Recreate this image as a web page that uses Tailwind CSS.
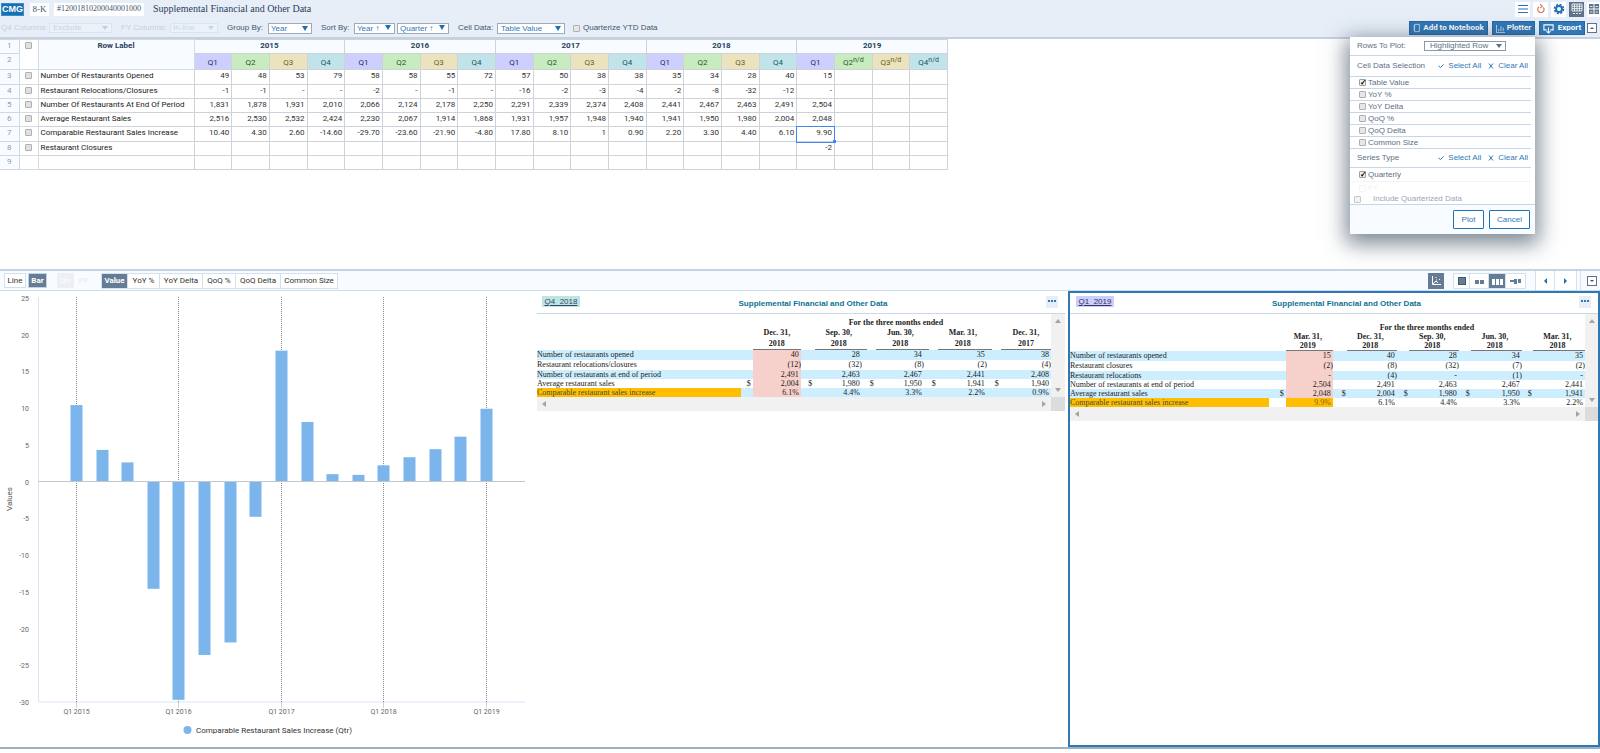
<!DOCTYPE html>
<html lang="en">
<head>
<meta charset="utf-8">
<title>Supplemental Financial and Other Data</title>
<script src="https://cdn.jsdelivr.net/npm/@tailwindcss/browser@4"></script>
</head>
<body class="bg-white font-['Liberation_Sans',Arial,sans-serif] text-[8px] leading-[10px] text-[#333]">
<div class="relative flex min-h-screen flex-col">
  <header class="h-[39px] border-b-2 border-[#c5d1e2] bg-[#e7eef8] text-[#41566e]">
    <div class="flex h-[18px] items-center">
      <span class="ml-px flex h-[13px] w-[23px] items-center justify-center border border-[#3c8ac6] bg-[#1670b4] text-[9px] font-bold text-white">CMG</span>
      <span class="ml-[6px] flex h-[13px] w-[19px] items-center justify-center bg-white font-['Liberation_Serif',serif] text-[9px]">8-K</span>
      <span class="ml-[5px] flex h-[13px] w-[90px] items-center justify-center bg-white font-['Liberation_Serif',serif] text-[8px]">#12001810200040001000</span>
      <h1 class="ml-[9px] font-['Liberation_Serif',serif] text-[10px] text-[#27405c]">Supplemental Financial and Other Data</h1>
      <nav class="ml-auto flex gap-[3px]">
        <button aria-label="Menu" class="flex size-[15px] items-center justify-center bg-white"><svg viewBox="0 0 12 12" class="size-3" fill="none" stroke="#2c74b8" stroke-width="1.2"><path d="M1 2.500h10M1 6h10M1 9.500h10"/></svg></button>
        <button aria-label="Reset" class="flex size-[15px] items-center justify-center bg-white"><svg viewBox="0 0 12 12" class="size-[10px]" fill="none" stroke="#dd6a4c" stroke-width="1.300"><path d="M3.500 3.500A3.800 3.800 0 1 0 8.800 4"/><path d="M5 .5l2.500 2.300L5 5"/></svg></button>
        <button aria-label="Settings" class="flex size-[15px] items-center justify-center bg-white"><svg viewBox="0 0 12 12" class="size-[12px]" fill="none" stroke="#1f6db4"><circle cx="6" cy="6" r="3" stroke-width="2"/><circle cx="6" cy="6" r="4.600" stroke-width="1.400" stroke-dasharray="2.100 1.510"/></svg></button>
        <button aria-label="Table view" class="flex size-[15px] items-center justify-center bg-[#5e7389]"><svg viewBox="0 0 12 12" class="size-[12px]" fill="none" stroke="#fff" stroke-width=".8"><path d="M1 1h10v7H1zM1 3.300h10M1 5.600h10M3.500 1v7M6 1v7M8.500 1v7M2 10.500h2M5 10.500h2M8 10.500h2"/></svg></button>
        <button aria-label="Grid view" class="flex h-[15px] w-[13px] items-center justify-center bg-white"><svg viewBox="0 0 12 12" class="size-[12px]" fill="#5e7389"><path d="M1 1h4.500v4.500H1zM6.500 1H11v4.500H6.500zM1 6.500h4.500V11H1zM6.500 6.500H11V11H6.500z"/><path d="M2 3.500h2.500M7.500 3.500H10M2 9h2.500M7.500 9H10" stroke="#fff" stroke-width=".8"/></svg></button>
      </nav>
    </div>
    <div class="flex h-[20px] items-center">
      <div class="flex items-center opacity-20">
        <label for="q4" class="ml-px w-[48px]">Q4 Columns:</label>
        <span class="relative"><select id="q4" class="block h-[10px] w-[63px] appearance-none border border-[#b5bfcb] bg-white px-[3px] leading-[8px]"><option>Exclude</option></select><i class="pointer-events-none absolute top-[3px] right-1 border-x-3 border-t-4 border-x-transparent border-t-[#41566e]"></i></span>
        <label for="fy" class="ml-[9px] w-[49px]">FY Columns:</label>
        <span class="relative"><select id="fy" class="block h-[10px] w-[48px] appearance-none border border-[#b5bfcb] bg-white px-[2px] leading-[8px] text-[#2f78b8]"><option>In-line</option></select><i class="pointer-events-none absolute top-[3px] right-1 border-x-3 border-t-4 border-x-transparent border-t-[#2f78b8]"></i></span>
      </div>
      <label for="group" class="ml-[9px] w-[41px]">Group By:</label>
      <span class="relative"><select id="group" class="block h-[11px] w-[44px] appearance-none border border-[#9fabb9] bg-white px-[2px] leading-[9px] text-[#2f78b8]"><option>Year</option></select><i class="pointer-events-none absolute top-[3px] right-1 border-x-3 border-t-5 border-x-transparent border-t-[#1c70b5]"></i></span>
      <label for="sort" class="ml-[9px] w-[33px]">Sort By:</label>
      <span class="relative"><select id="sort" class="block h-[11px] w-[41px] appearance-none border border-[#9fabb9] bg-white px-[2px] leading-[9px] text-[#2f78b8]"><option>Year ↑</option></select><i class="pointer-events-none absolute top-[2px] right-1 border-x-3 border-t-5 border-x-transparent border-t-[#1c70b5]"></i></span>
      <span class="relative ml-[2px]"><select aria-label="Then sort by" class="block h-[11px] w-[52px] appearance-none border border-[#9fabb9] bg-white px-[2px] leading-[9px] text-[#2f78b8]"><option>Quarter ↑</option></select><i class="pointer-events-none absolute top-[2px] right-1 border-x-3 border-t-5 border-x-transparent border-t-[#1c70b5]"></i></span>
      <label for="cell" class="ml-[9px] w-[39px]">Cell Data:</label>
      <span class="relative"><select id="cell" class="block h-[11px] w-[68px] appearance-none border border-[#9fabb9] bg-white px-[3px] leading-[9px] text-[#2f78b8]"><option>Table Value</option></select><i class="pointer-events-none absolute top-[3px] right-1 border-x-3 border-t-5 border-x-transparent border-t-[#1c70b5]"></i></span>
      <label class="ml-[8px] flex items-center gap-[3px]"><input type="checkbox" class="size-[7px] appearance-none rounded-[1px] border border-[#b0b0b0] bg-[#e6e6e6]">Quarterize YTD Data</label>
      <div class="ml-auto flex items-center gap-[4px] pr-[3px] font-['Roboto',sans-serif] font-bold text-white">
        <button class="flex h-[14px] w-[79px] items-center justify-center gap-[2px] border border-[#2568a5] bg-[#3178b7] text-[8px] whitespace-nowrap"><svg viewBox="0 0 10 12" class="h-[10px] w-2" fill="none" stroke="#cfe2f4"><path d="M2 1.500h6v9H2zM.5 3.500h2M.5 6h2M.5 8.500h2"/></svg>Add to Notebook</button>
        <button class="flex h-[14px] w-[43px] items-center justify-center gap-[2px] border border-[#2568a5] bg-[#3178b7] text-[8px]"><svg viewBox="0 0 10 10" class="size-[9px]" fill="none" stroke="#cfe2f4"><path d="M.5 1v8.500H10M3 8V5.500M5.500 8V2.500M8 8V4"/></svg>Plotter</button>
        <button class="flex h-[14px] w-[46px] items-center justify-center gap-[4px] border border-[#2568a5] bg-[#3178b7] text-[8px]"><svg viewBox="0 0 12 12" class="size-[11px]" fill="none" stroke="#fff" stroke-width="1.200"><path d="M4 7.500H1V2h10v5.500H8M6 5v6M3.800 8.800L6 11l2.200-2.200"/></svg>Export</button>
        <button aria-label="Collapse" class="-ml-[2px] flex size-[10px] items-center justify-center border border-[#5e7389] bg-white"><i class="border-x-2 border-b-2 border-x-transparent border-b-[#41566e]"></i></button>
      </div>
    </div>
  </header>

  <section class="h-[230px] font-['Roboto',sans-serif]">
    <table id="data" class="w-[948px] table-fixed border-collapse text-right">
      <colgroup><col class="w-[19px]"><col class="w-[19px]"><col class="w-[156px]"></colgroup>
      <thead></thead><tbody></tbody>
    </table>
  </section>

  <div class="flex h-[22px] items-center border-t-2 border-b border-t-[#c5d3e5] border-b-[#cddced] bg-[#f8fbff] pl-[4px] font-['Roboto',sans-serif] text-[#333]">
    <div class="flex"><button class="h-[15px] w-[22px] border border-[#d3e0ee] bg-white">Line</button><button class="ml-[2px] h-[15px] w-[19px] border border-[#c3d3e4] bg-[#647c94] font-bold text-white">Bar</button></div>
    <div class="ml-[10px] flex text-[#e3e8ee]"><button disabled class="h-[15px] w-[17px] bg-[#eceff3] text-white">Qtr</button><button disabled class="h-[15px] w-[18px]">FY</button></div>
    <div class="ml-[9px] flex divide-x divide-[#d3e0ee] border border-[#d3e0ee] bg-white"><button class="h-[14px] w-[26px] bg-[#647c94] font-bold text-white">Value</button><button class="w-[32px]">YoY %</button><button class="w-[43px]">YoY Delta</button><button class="w-[33px]">QoQ %</button><button class="w-[45px]">QoQ Delta</button><button class="w-[56px]">Common Size</button></div>
    <div class="ml-auto flex items-center">
      <button aria-label="Chart" class="flex size-[16px] items-center justify-center bg-[#647c94]"><svg viewBox="0 0 10 10" class="size-[10px]" fill="none" stroke="#fff"><path d="M1.500 0v8.500H10M2 8l3-3 2 2M4.500 1.500h1M8 3.500h1M5 4h1"/></svg></button>
      <div class="ml-[9px] flex h-[16px] divide-x divide-[#d3e0ee] border border-[#d3e0ee] bg-white">
        <button aria-label="One panel" class="flex w-[16px] items-center justify-center"><i class="size-[8px] border border-[#405a75] bg-[#647c94]"></i></button>
        <button aria-label="Two panels" class="flex w-[19px] items-center justify-center gap-px pt-[3px]"><i class="size-[4px] bg-[#647c94]"></i><i class="size-[4px] bg-[#647c94]"></i></button>
        <button aria-label="Three panels" class="flex w-[17px] items-center justify-center gap-px bg-[#647c94] pt-[2px]"><i class="h-[6px] w-[3px] bg-white"></i><i class="h-[6px] w-[3px] bg-white"></i><i class="h-[6px] w-[3px] bg-white"></i></button>
        <button aria-label="Mixed panels" class="flex w-[19px] items-center justify-center"><i class="h-[2px] w-[4px] bg-[#647c94]"></i><i class="mt-[2px] mr-px h-[5px] w-[3px] bg-[#647c94]"></i><i class="h-[4px] w-[3px] bg-[#647c94]"></i></button>
      </div>
      <div class="ml-[9px] flex h-[19px] divide-x divide-[#d3e0ee] border-x border-[#d3e0ee] bg-white">
        <button aria-label="Previous" class="flex w-[19px] items-center justify-center"><i class="border-y-3 border-r-3 border-y-transparent border-r-[#1c70b5]"></i></button>
        <button aria-label="Next" class="flex w-[21px] items-center justify-center"><i class="border-y-3 border-l-3 border-y-transparent border-l-[#1c70b5]"></i></button>
      </div>
      <div class="ml-[3px] flex h-[19px] items-center border-l border-[#d3e0ee] pr-[3px] pl-[6px]"><button aria-label="Expand" class="flex size-[10px] items-center justify-center border border-[#5e7389] bg-white"><i class="border-x-2 border-t-2 border-x-transparent border-t-[#41566e]"></i></button></div>
    </div>
  </div>

  <main class="flex flex-1 border-b-2 border-[#9db0c2]">
    <figure class="w-[535px] shrink-0">
      <svg id="chart" viewBox="0 0 535 455" class="block w-full font-['Roboto',sans-serif]" role="img" aria-label="Comparable Restaurant Sales Increase by quarter"></svg>
    </figure>
    <section class="ml-[2px] min-w-0 flex-1">
      <div class="flex h-[23px] items-center justify-between border-b border-[#c9d9ea] px-[5px]"><a href="#q4-2018" class="-mt-px w-[38px] bg-[#bfe4e8] text-center leading-[11px] text-[#2c4a5c] underline">Q4&nbsp; 2018</a><h2 class="pt-[3px] text-[8px] font-bold text-[#0c7391]">Supplemental Financial and Other Data</h2><button aria-label="More" class="-mt-px mr-[2px] flex size-[12px] justify-center gap-px bg-[#e7eef8] pt-1"><i class="size-[2px] bg-[#2f78b8]"></i><i class="size-[2px] bg-[#2f78b8]"></i><i class="size-[2px] bg-[#2f78b8]"></i></button></div>
      <div class="flex">
        <div class="min-w-0 flex-1"><table id="doc1" class="w-full table-fixed border-collapse text-right font-['Liberation_Serif',serif] text-[8px] leading-[9px] text-[#222]"></table></div>
        <div class="flex w-[14px] flex-col items-center justify-between bg-[#f1f1f1] py-[5px]"><i class="border-x-3 border-b-4 border-x-transparent border-b-[#a3a3a3]"></i><i class="border-x-3 border-t-4 border-x-transparent border-t-[#a3a3a3]"></i></div>
      </div>
      <div class="flex h-[14px] items-center bg-[#f1f1f1]"><i class="ml-[5px] border-y-3 border-r-4 border-y-transparent border-r-[#a3a3a3]"></i><i class="mr-[5px] ml-auto border-y-3 border-l-4 border-y-transparent border-l-[#a3a3a3]"></i><span class="h-full w-[14px] bg-[#dcdcdc]"></span></div>
    </section>
    <section class="ml-[3px] min-w-0 flex-1 border-2 border-[#2f78b3]">
      <div class="flex h-[21px] items-center justify-between border-b border-[#c9d9ea] px-[6px]"><a href="#q1-2019" class="-mt-[3px] w-[38px] bg-[#ccceff] text-center leading-[11px] text-[#32325c] underline">Q1&nbsp; 2019</a><h2 class="pt-px text-[8px] font-bold text-[#0c7391]">Supplemental Financial and Other Data</h2><button aria-label="More" class="-mt-[3px] mr-px flex size-[12px] justify-center gap-px bg-[#e7eef8] pt-1"><i class="size-[2px] bg-[#2f78b8]"></i><i class="size-[2px] bg-[#2f78b8]"></i><i class="size-[2px] bg-[#2f78b8]"></i></button></div>
      <div class="flex">
        <div class="min-w-0 flex-1"><table id="doc2" class="w-full table-fixed border-collapse text-right font-['Liberation_Serif',serif] text-[8px] leading-[9px] text-[#222]"></table></div>
        <div class="flex w-[13px] flex-col items-center justify-between bg-[#f1f1f1] py-[5px]"><i class="border-x-3 border-b-4 border-x-transparent border-b-[#a3a3a3]"></i><i class="border-x-3 border-t-4 border-x-transparent border-t-[#a3a3a3]"></i></div>
      </div>
      <div class="flex h-[14px] items-center bg-[#f1f1f1]"><i class="ml-[5px] border-y-3 border-r-4 border-y-transparent border-r-[#a3a3a3]"></i><i class="mr-[5px] ml-auto border-y-3 border-l-4 border-y-transparent border-l-[#a3a3a3]"></i><span class="h-full w-[13px] bg-[#dcdcdc]"></span></div>
    </section>
  </main>
  <div class="h-[4px]"></div>

  <form class="absolute top-[37px] right-[65px] w-[185px] bg-white text-[#5c6f84] shadow-[0_6px_20px_4px_rgba(40,60,80,0.6)]">
    <div class="flex h-[19px] items-center border-b border-[#c5d6e8] pl-[7px]"><label for="rows" class="w-[67px]">Rows To Plot:</label><span class="relative"><select id="rows" class="block h-[10px] w-[82px] appearance-none border border-[#8b99a8] bg-white px-[5px] leading-[8px]"><option>Highlighted Row</option></select><i class="pointer-events-none absolute top-[3px] right-[4px] border-x-3 border-t-4 border-x-transparent border-t-[#5c6f84]"></i></span></div>
    <div class="mr-[4px] flex h-[21px] items-center border-b border-[#c5d6e8] pl-[7px]"><span>Cell Data Selection</span><div class="ml-auto flex gap-[7px] pr-[3px] text-[#2f78b8]"><button type="button" class="flex items-center gap-[4px]"><svg viewBox="0 0 6 6" class="size-[6px]" fill="none" stroke="#2f78b8"><path d="M.5 3l2 1.500 3-3"/></svg>Select All</button><button type="button" class="flex items-center gap-[4px]"><svg viewBox="0 0 6 6" class="size-[6px]" fill="none" stroke="#2f78b8"><path d="M1 .5l4 5M5 .5l-4 5"/></svg>Clear All</button></div></div>
    <div id="checks" class="mr-[4px]"></div>
    <div class="mr-[4px] flex h-[19px] items-center border-b border-[#c5d6e8] pl-[7px]"><span>Series Type</span><div class="ml-auto flex gap-[7px] pr-[3px] text-[#2f78b8]"><button type="button" class="flex items-center gap-[4px]"><svg viewBox="0 0 6 6" class="size-[6px]" fill="none" stroke="#2f78b8"><path d="M.5 3l2 1.500 3-3"/></svg>Select All</button><button type="button" class="flex items-center gap-[4px]"><svg viewBox="0 0 6 6" class="size-[6px]" fill="none" stroke="#2f78b8"><path d="M1 .5l4 5M5 .5l-4 5"/></svg>Clear All</button></div></div>
    <label class="mr-[4px] flex h-[14px] items-center gap-[2px] border-b border-[#f2f5f8] pl-[9px]"><input type="checkbox" checked class="size-[7px] appearance-none rounded-[1px] border border-[#a0a0a0] bg-[#f0f0f0] text-[8px] leading-[5px] font-bold text-black before:block checked:before:content-['✓']">Quarterly</label>
    <label class="flex h-[12px] items-center gap-[2px] pl-[9px] opacity-10"><input type="checkbox" disabled class="size-[7px] appearance-none rounded-[1px] border border-[#a0a0a0]">FY</label>
    <label class="flex h-[11px] items-center gap-[12px] border-b border-[#c5d6e8] pl-[4px] text-[#9aa7b5]"><input type="checkbox" class="size-[7px] appearance-none rounded-[1px] border border-[#c8c8c8] bg-[#f3f3f3]">Include Quarterized Data</label>
    <div class="flex h-[29px] items-center justify-end gap-[5px] bg-[#f8fbff] pr-[5px] text-[#2f78b8]"><button type="button" class="h-[19px] w-[31px] rounded-[1px] border border-[#1c70b5] bg-white">Plot</button><button type="button" class="h-[19px] w-[41px] rounded-[1px] border border-[#1c70b5] bg-white">Cancel</button></div>
  </form>
</div>

<script>
const quarterTone = ['bg-[#cdcfff] text-[#27275e]', 'bg-[#c9ebc0] text-[#1f5a1f]', 'bg-[#ebe3bd] text-[#6b5f20]', 'bg-[#c0e4ea] text-[#205560]'];
const rowNo = n => `<th scope="row" class="border border-l-0 border-[#cfd8e4] bg-[#f8fbff] text-center align-top font-normal leading-[12px] text-[#8c9db5]">${n}</th>`;
const box = label => `<input type="checkbox" aria-label="${label}" class="mx-auto mt-[2px] block size-[7px] appearance-none rounded-[1px] border border-[#b0b0b0] bg-[#e0e0e0]">`;
let head = `<tr class="h-[14px]">${rowNo(1)}<td rowspan="2" class="border border-[#d5dbe3] align-top">${box('Select all rows')}</td><th rowspan="2" class="border border-[#d5dbe3] bg-[#f8fbff] pt-px text-center align-top font-bold text-[#27405c]">Row Label</th>`;
for (const y of [2015, 2016, 2017, 2018, 2019]) head += `<th colspan="4" class="border border-[#cfd3d8] bg-[#f8fbff] text-center align-top leading-[11px] font-bold text-[#27405c]">${y}</th>`;
head += `</tr><tr class="h-[16px]">${rowNo(2)}`;
for (let i = 0; i < 20; i++) head += `<th class="border border-[#cfd3d8] pt-[3px] text-center font-normal ${quarterTone[i % 4]}">Q${i % 4 + 1}${i > 16 ? '<sup class="text-[7px] leading-none">n/d</sup>' : ''}</th>`;
document.querySelector('#data thead').innerHTML = head + '</tr>';

const rows = [
  ['Number Of Restaurants Opened', '49 48 53 79 58 58 55 72 57 50 38 38 35 34 28 40 15'],
  ['Restaurant Relocations/Closures', '-1 -1 - - -2 - -1 - -16 -2 -3 -4 -2 -8 -32 -12 -'],
  ['Number Of Restaurants At End Of Period', '1,831 1,878 1,931 2,010 2,066 2,124 2,178 2,250 2,291 2,339 2,374 2,408 2,441 2,467 2,463 2,491 2,504'],
  ['Average Restaurant Sales', '2,516 2,530 2,532 2,424 2,230 2,067 1,914 1,868 1,931 1,957 1,948 1,940 1,941 1,950 1,980 2,004 2,048'],
  ['Comparable Restaurant Sales Increase', '10.40 4.30 2.60 -14.60 -29.70 -23.60 -21.90 -4.80 17.80 8.10 1 0.90 2.20 3.30 4.40 6.10 9.90'],
  ['Restaurant Closures', '                -2'],
  ['', '']
];
document.querySelector('#data tbody').innerHTML = rows.map(([name, vals], r) => {
  const v = vals.split(' ');
  let h = `<tr class="${r === 0 || r === 4 ? 'h-[15px]' : 'h-[14px]'} align-top leading-[12px]">${rowNo(r + 3)}<td class="border border-[#d5dbe3]">${name ? box('Select ' + name) : ''}</td><td class="border border-[#cfd3d8] pl-[2px] text-left text-[#222] whitespace-nowrap">${name}</td>`;
  for (let i = 0; i < 20; i++) h += r === 4 && i === 16
    ? `<td class="relative border border-[#cfd3d8] pr-[2px] outline-[1px] outline-[#4285f4]">${v[i]}<i class="absolute -right-[2px] -bottom-[2px] size-[3px] bg-[#4285f4]"></i></td>`
    : `<td class="border border-[#cfd3d8] pr-[2px]">${v[i] || ''}</td>`;
  return h + '</tr>';
}).join('');

document.getElementById('checks').innerHTML = ['Table Value', 'YoY %', 'YoY Delta', 'QoQ %', 'QoQ Delta', 'Common Size'].map((t, i) =>
  `<label class="flex h-[12px] items-center gap-[2px] border-b border-[#c5d6e8] pl-[9px]"><input type="checkbox" ${i ? '' : 'checked'} class="size-[7px] appearance-none rounded-[1px] border border-[#b0b0b0] bg-[#e6e6e6] text-[8px] leading-[5px] font-bold text-black before:block checked:border-[#a0a0a0] checked:bg-[#f0f0f0] checked:before:content-['✓']">${t}</label>`).join('');

const series = rows[4][1].split(' ').map(Number);
const Y = v => 190.500 - v * 7.350, X = i => Math.round(76 + i * 25.620) + .5;
let s = '<path d="M38.500 6v405H525" fill="none" stroke="#dbe6f5"/>';
for (let v = 25; v >= -30; v -= 5) s += `<text x="29" y="${Y(v) + 3}" text-anchor="end" font-size="7" fill="#666">${v}</text>`;
for (let i = 0; i < 17; i += 4) s += `<path d="M${X(i)} 6V411" stroke="#888" stroke-dasharray="1 1"/><path d="M${X(i)} 411v6" stroke="#ccd6eb"/><text x="${X(i)}" y="423" text-anchor="middle" font-size="7" fill="#666">Q1 ${2015 + i / 4}</text>`;
series.forEach((v, i) => s += `<rect x="${X(i) - 6}" width="12" y="${Math.min(Y(0), Y(v))}" height="${Math.abs(v) * 7.350}" fill="#7cb5ec"/>`);
s += `<path d="M38 190.500H525" stroke="#c3c8cf"/><text transform="translate(12 208) rotate(-90)" font-size="8" fill="#555" text-anchor="middle">Values</text><circle cx="187.500" cy="439" r="4" fill="#7cb5ec"/><text x="196" y="442" font-size="8" fill="#333">Comparable Restaurant Sales Increase (Qtr)</text>`;
document.getElementById('chart').innerHTML = s;

function doc(id, widths, headRow, dates, data) {
  const second = id === 'doc2';
  let h = `<colgroup><col>${widths.map(w => `<col style="width:${w}px">`).join('')}</colgroup><thead>`;
  h += `<tr class="${headRow}"><td></td><th colspan="15" class="text-center align-bottom font-bold">For the three months ended</th></tr>`;
  h += `<tr class="text-center font-bold"><td></td>${dates.map((d, i) => `<td colspan="2"></td><th class="border-b border-[#777] whitespace-nowrap ${second ? 'pr-[3px] leading-[9px]' : i % 4 ? 'pr-[4px] leading-[11px]' : 'leading-[11px]'}">${d[0]}<br>${d[1]}</th>`).join('')}</tr></thead><tbody>`;
  data.forEach(([name, money, vals], r) => {
    const last = r === data.length - 1;
    h += `<tr class="${r < 2 ? 'h-[10px]' : 'h-[9px]'} ${r % 2 ? '' : 'bg-[#cceeff]'}"><td class="text-left whitespace-nowrap ${last ? 'bg-[#ffbf00] text-[#4a4a3a]' : ''}">${name}</td>`;
    vals.split(' ').forEach((v, i) => {
      const tone = i ? '' : last && second ? 'bg-[#ffbf00] text-[#8a6000]' : 'bg-[#f6d0cb]';
      h += `<td></td><td class="text-center">${money ? '$' : ''}</td><td class="${tone} ${i % 4 === 0 || second ? (v.endsWith(')') ? 'pr-0' : 'pr-[2px]') : (v.endsWith(')') ? 'pr-[5px]' : 'pr-[7px]')}">${v}</td>`;
    });
    h += '</tr>';
  });
  document.getElementById(id).innerHTML = h + '</tbody>';
}
doc('doc1', [4, 8, 48, 5, 9, 52, 1, 8, 53, 1, 8, 54, 1, 8, 50], 'h-[13px]',
  [['Dec. 31,', 2018], ['Sep. 30,', 2018], ['Jun. 30,', 2018], ['Mar. 31,', 2018], ['Dec. 31,', 2017]],
  [['Number of restaurants opened', 0, '40 28 34 35 38'],
   ['Restaurant relocations/closures', 0, '(12) (32) (8) (2) (4)'],
   ['Number of restaurants at end of period', 0, '2,491 2,463 2,467 2,441 2,408'],
   ['Average restaurant sales', 1, '2,004 1,980 1,950 1,941 1,940'],
   ['Comparable restaurant sales increase', 0, '6.1% 4.4% 3.3% 2.2% 0.9%']]);
doc('doc2', [9, 8, 47, 8, 6, 50, 6, 6, 50, 6, 6, 51, 5, 6, 52], 'h-[18px]',
  [['Mar. 31,', 2019], ['Dec. 31,', 2018], ['Sep. 30,', 2018], ['Jun. 30,', 2018], ['Mar. 31,', 2018]],
  [['Number of restaurants opened', 0, '15 40 28 34 35'],
   ['Restaurant closures', 0, '(2) (8) (32) (7) (2)'],
   ['Restaurant relocations', 0, '- (4) - (1) -'],
   ['Number of restaurants at end of period', 0, '2,504 2,491 2,463 2,467 2,441'],
   ['Average restaurant sales', 1, '2,048 2,004 1,980 1,950 1,941'],
   ['Comparable restaurant sales increase', 0, '9.9% 6.1% 4.4% 3.3% 2.2%']]);
</script>
</body>
</html>
